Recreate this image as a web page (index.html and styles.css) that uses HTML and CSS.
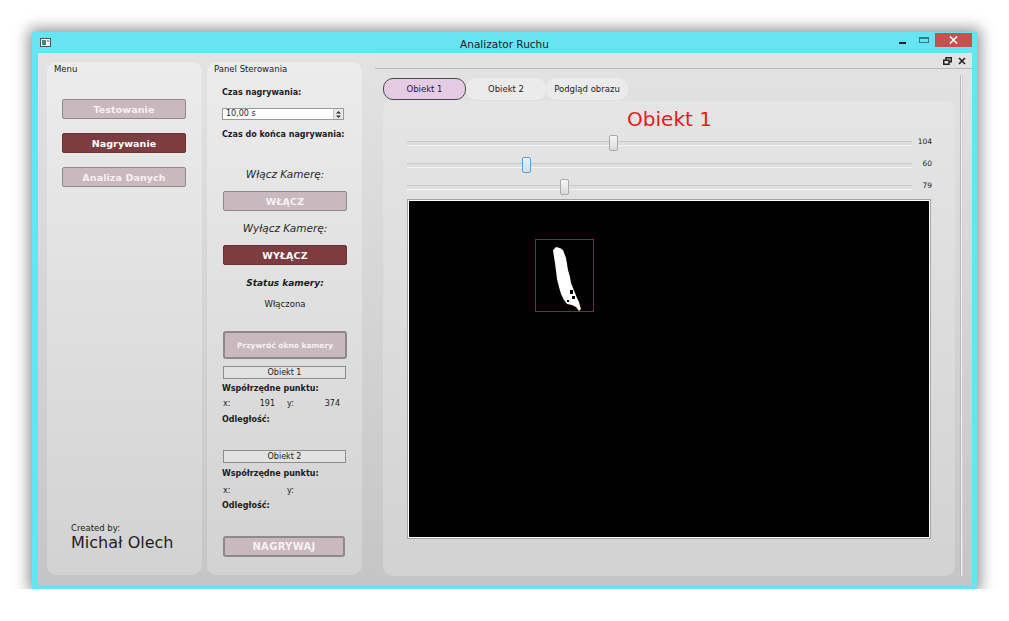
FILE: index.html
```html
<!DOCTYPE html>
<html lang="pl">
<head>
<meta charset="utf-8">
<title>Analizator Ruchu</title>
<link rel="stylesheet" href="styles.css">
</head>
<body>
<div class="window">
  <div class="titlebar">
    <div class="tb-left">
      <svg class="app-icon" width="11" height="9" viewBox="0 0 11 9">
        <rect x="0.5" y="0.5" width="10" height="8" fill="#f4f4f4" stroke="#555"/>
        <rect x="2" y="2" width="4" height="5" fill="#3d8f7a"/>
        <rect x="7" y="2" width="2" height="2" fill="#7fa6c9"/>
      </svg>
    </div>
    <div class="title">Analizator Ruchu</div>
    <div class="tb-right">
      <span class="wc-min"></span>
      <span class="wc-max"></span>
      <span class="wc-close">
        <svg width="9" height="8" viewBox="0 0 9 8"><path d="M1 0.5 L8 7.5 M8 0.5 L1 7.5" stroke="#fff" stroke-width="1.6"/></svg>
      </span>
    </div>
  </div>

  <div class="client">
    <section class="panel menu">
      <div class="panel-label">Menu</div>
      <div class="menu-buttons">
        <button class="btn">Testowanie</button>
        <button class="btn active">Nagrywanie</button>
        <button class="btn">Analiza Danych</button>
      </div>
      <div class="credits">
        <div class="created">Created by:</div>
        <div class="author">Michał Olech</div>
      </div>
    </section>

    <section class="panel control">
      <div class="panel-label">Panel Sterowania</div>
      <div class="lbl b s-czas">Czas nagrywania:</div>
      <div class="spin">
        <span class="spin-val">10,00 s</span>
        <span class="spin-btn">
          <svg width="7" height="9" viewBox="0 0 7 9"><path d="M1 3.5 L3.5 1 L6 3.5 Z M1 5.5 L3.5 8 L6 5.5 Z" fill="#333"/></svg>
        </span>
      </div>
      <div class="lbl b s-koniec">Czas do końca nagrywania:</div>
      <div class="lbl it center s-wlacz">Włącz Kamerę:</div>
      <button class="btn wide s-btn1">WŁĄCZ</button>
      <div class="lbl it center s-wylacz">Wyłącz Kamerę:</div>
      <button class="btn wide active s-btn2">WYŁĄCZ</button>
      <div class="lbl bi center s-status">Status kamery:</div>
      <div class="lbl n center s-wlaczona">Włączona</div>
      <button class="btn wide restore s-restore">Przywróć okno kamery</button>
      <div class="objbox s-obj1">Obiekt 1</div>
      <div class="lbl b s-wsp1">Współrzędne punktu:</div>
      <div class="coords s-xy1">
        <div class="coord"><span>x:</span><span>191</span></div>
        <div class="coord"><span>y:</span><span>374</span></div>
      </div>
      <div class="lbl b s-odl1">Odległość:</div>
      <div class="objbox s-obj2">Obiekt 2</div>
      <div class="lbl b s-wsp2">Współrzędne punktu:</div>
      <div class="coords s-xy2">
        <div class="coord"><span>x:</span><span></span></div>
        <div class="coord"><span>y:</span><span></span></div>
      </div>
      <div class="lbl b s-odl2">Odległość:</div>
      <button class="btn wide rec s-rec">NAGRYWAJ</button>
    </section>

    <section class="mdi">
      <div class="mdi-strip">
        <svg width="9" height="8" viewBox="0 0 9 8"><rect x="3" y="0.75" width="5.25" height="4" fill="none" stroke="#222" stroke-width="1.5"/><rect x="0.75" y="3.25" width="5.25" height="4" fill="#e4e4e4" stroke="#222" stroke-width="1.5"/></svg>
        <svg width="8" height="8" viewBox="0 0 8 8"><path d="M1 1 L7 7 M7 1 L1 7" stroke="#222" stroke-width="1.6"/></svg>
      </div>
      <div class="mdi-body">
        <div class="mdi-main">
          <div class="tabs">
            <div class="tab current">Obiekt 1</div>
            <div class="tab t2">Obiekt 2</div>
            <div class="tab t3">Podgląd obrazu</div>
          </div>
          <div class="tab-panel">
            <div class="obj-title">Obiekt 1</div>
            <div class="slider-row">
              <div class="track"><span class="handle" style="left: 40.8%"></span></div>
              <div class="val">104</div>
            </div>
            <div class="slider-row">
              <div class="track"><span class="handle focus" style="left: 23.5%"></span></div>
              <div class="val">60</div>
            </div>
            <div class="slider-row">
              <div class="track"><span class="handle" style="left: 31%"></span></div>
              <div class="val">79</div>
            </div>
            <div class="frame">
              <svg width="520" height="336" viewBox="0 0 520 336">
                <rect width="520" height="336" fill="#000"/>
                <rect x="126.5" y="38.5" width="58" height="72" fill="none" stroke="#e00000" stroke-width="1"/>
                <polygon fill="#fff" points="144,49 147,46 151,47 154,49 157,57 158,63 159,69 161,76 162,82 164,87 166,92 168,97 170,101 171,105 172,108 170,110 167,106 163,104 158,103 155,99 152,93 150,86 148,78 147,70 146,62 145,56"/>
                <rect x="161" y="89" width="3" height="4" fill="#000"/>
                <rect x="163" y="95" width="3" height="3" fill="#000"/>
                <rect x="158" y="99" width="2" height="2" fill="#000"/>
              </svg>
            </div>
          </div>
        </div>
        <div class="vscroll"></div>
      </div>
    </section>
  </div>
</div>
</body>
</html>
```

FILE: styles.css
```css
* { box-sizing: border-box; }

html, body {
  margin: 0;
  padding: 0;
  background: #ffffff;
}

body {
  padding: 32px 0 0 32px;
  font-family: "DejaVu Sans", "Liberation Sans", sans-serif;
  color: #1c1c1c;
}

.window {
  width: 945px;
  height: 557px;
  background: #67e4f1;
  box-shadow: 0 0 14px 3px rgba(0, 0, 0, 0.45);
  display: flex;
  flex-direction: column;
}

/* title bar */
.titlebar {
  height: 21px;
  display: grid;
  grid-template-columns: 1fr auto 1fr;
  align-items: start;
}
.tb-left { padding: 6px 0 0 8px; }
.app-icon { display: block; }
.title {
  font-size: 10.5px;
  line-height: 13px;
  padding-top: 6px;
  color: #1a1a1a;
}
.tb-right {
  display: flex;
  justify-content: flex-end;
  align-items: flex-start;
  padding: 1px 5px 0 0;
}
.wc-min {
  width: 7px;
  height: 2px;
  background: #222;
  margin: 9px 13px 0 0;
}
.wc-max {
  width: 10px;
  height: 6px;
  border: 1px solid #2f7f8b;
  border-top-width: 2px;
  margin: 4px 6px 0 0;
}
.wc-close {
  width: 37px;
  height: 14px;
  background: #c75050;
  display: flex;
  align-items: center;
  justify-content: center;
}
.wc-close svg { display: block; }

/* client area */
.client {
  flex: 1;
  margin: 0 5px 4px 6px;
  background: linear-gradient(#e3e3e3, #c5c5c5);
  display: flex;
  padding: 9px 0 0 9px;
}

.panel {
  width: 155px;
  height: 513px;
  border-radius: 10px;
  background: linear-gradient(#ececec, #d2d2d2);
  display: flex;
  flex-direction: column;
}
.panel + .panel { margin-left: 5px; }

.panel-label {
  font-size: 8.5px;
  line-height: 14px;
  height: 14px;
  padding-left: 7px;
  color: #222;
}

/* buttons */
.btn {
  display: block;
  width: 124px;
  height: 20px;
  padding: 0;
  margin: 0;
  border: 1px solid #8e8a8b;
  border-radius: 2px;
  background: #c9b8be;
  color: #f7f1f3;
  font-family: "DejaVu Sans", "Liberation Sans", sans-serif;
  font-weight: bold;
  font-size: 9.5px;
  letter-spacing: 0.1px;
}
.btn.active {
  background: #7d3c3f;
  border-color: #6b3234;
  color: #ffffff;
}

/* menu panel */
.menu-buttons {
  display: flex;
  flex-direction: column;
  gap: 14px;
  padding: 23px 0 0 15px;
}
.credits {
  margin-top: auto;
  padding: 0 0 23px 24px;
}
.created {
  font-size: 8.5px;
  line-height: 12px;
  color: #222;
}
.author {
  font-size: 16px;
  line-height: 18px;
  color: #1e1e1e;
}

/* control panel */
.control { padding-left: 15px; }
.control .panel-label { margin-left: -15px; }

.lbl {
  font-size: 8px;
  line-height: 14px;
  height: 14px;
  white-space: nowrap;
}
.lbl.b { font-weight: bold; }
.lbl.it { font-style: italic; font-size: 10.5px; color: #2a2a2a; }
.lbl.bi { font-weight: bold; font-style: italic; font-size: 9px; }
.lbl.n { font-size: 8.5px; }
.lbl.center { width: 124px; text-align: center; padding-left: 2px; }

.spin {
  width: 122px;
  height: 12px;
  background: #fff;
  border: 1px solid #9a9a9a;
  display: flex;
  align-items: center;
  justify-content: space-between;
  font-size: 8px;
}
.spin-val { padding-left: 3px; line-height: 10px; }
.spin-btn {
  width: 10px;
  height: 10px;
  background: #e8e8e8;
  border-left: 1px solid #c4c4c4;
  display: flex;
  align-items: center;
  justify-content: center;
}
.spin-btn svg { display: block; }

.btn.wide { margin-left: 1px; }
.btn.restore {
  height: 28px;
  font-size: 7.5px;
  letter-spacing: 0;
  border-color: #8a8a8a;
  border-width: 2px;
  border-radius: 3px;
}
.btn.rec {
  width: 122px;
  height: 21px;
  font-size: 10px;
  letter-spacing: 0.3px;
  border-width: 2px;
  border-radius: 3px;
}

.objbox {
  width: 123px;
  height: 13px;
  margin-left: 1px;
  background: #e2e2e2;
  border: 1px solid #8d8d8d;
  font-size: 8px;
  line-height: 11px;
  text-align: center;
  color: #222;
}

.coords {
  display: grid;
  grid-template-columns: 52px 53px;
  column-gap: 12px;
  font-size: 8px;
  line-height: 14px;
  height: 14px;
  padding-left: 1px;
}
.coord {
  display: flex;
  justify-content: space-between;
}

.s-czas { margin-top: 10px; }
.spin { margin-top: 8px; }
.s-koniec { margin-top: 8px; }
.s-wlacz { margin-top: 25px; }
.s-btn1 { margin-top: 10px; }
.s-wylacz { margin-top: 10px; }
.s-btn2 { margin-top: 10px; }
.s-status { margin-top: 11px; }
.s-wlaczona { margin-top: 7px; }
.s-restore { margin-top: 20px; }
.s-obj1 { margin-top: 7px; }
.s-wsp1 { margin-top: 3px; }
.s-xy1 { margin-top: 1px; }
.s-odl1 { margin-top: 2px; }
.s-obj2 { margin-top: 23px; }
.s-wsp2 { margin-top: 4px; }
.s-xy2 { margin-top: 3px; }
.s-odl2 { margin-top: 1px; }
.s-rec { margin-top: 23px; }

/* mdi area */
.mdi {
  width: 597px;
  margin: -9px 0 0 13px;
  display: flex;
  flex-direction: column;
}
.mdi-strip {
  height: 16px;
  background: #e2e2e2;
  border-bottom: 1px solid #b9b9b9;
  display: flex;
  justify-content: flex-end;
  align-items: center;
  gap: 6px;
  padding: 1px 6px 0 0;
}
.mdi-strip svg { display: block; }

.mdi-body {
  flex: 1;
  display: flex;
  padding: 9px 0 9px 8px;
}
.mdi-main {
  width: 572px;
  display: flex;
  flex-direction: column;
}
.vscroll {
  width: 3px;
  margin: -3px 0 0 5px;
  background: #f3f3f3;
  border-left: 1px solid #b8b8b8;
  border-right: 1px solid #d0d0d0;
}

.tabs {
  display: flex;
  height: 22px;
}
.tab {
  height: 22px;
  border-radius: 10px;
  font-size: 8.5px;
  line-height: 22px;
  text-align: center;
  color: #1e1e1e;
  background: #ebebeb;
}
.tab.current {
  width: 83px;
  background: #e6cbe5;
  border: 1px solid #4a4a4a;
  line-height: 20px;
}
.tab.t2 { width: 80px; }
.tab.t3 { width: 82px; }

.tab-panel {
  flex: 1;
  margin-top: 1px;
  border-radius: 10px;
  background: linear-gradient(#e5e5e5, #d2d2d2);
  padding: 7px 23px 0 24px;
}
.obj-title {
  height: 23px;
  font-size: 20px;
  line-height: 23px;
  text-align: center;
  color: #f01818;
  padding-left: 0;
}
.slider-row {
  display: flex;
  height: 22px;
}
.track {
  flex: 1;
  position: relative;
}
.track::before {
  content: "";
  position: absolute;
  left: 0;
  right: 0;
  top: 10px;
  height: 3px;
  border-top: 1px solid #c9c9c9;
  border-bottom: 1px solid #f4f4f4;
  background: #dedede;
}
.handle {
  position: absolute;
  top: 4px;
  width: 9px;
  height: 16px;
  margin-left: -4px;
  border: 1px solid #a9a9a9;
  border-radius: 2px;
  background: linear-gradient(#f6f6f6, #dadada);
}
.handle.focus {
  border-color: #5b9fd6;
  background: linear-gradient(#e6f1fa, #cfe1f1);
}
.val {
  width: 20px;
  text-align: right;
  font-size: 7.5px;
  line-height: 22px;
  color: #222;
}

.frame {
  margin: 3px 0 0 1px;
  width: 522px;
  height: 338px;
  border: 1px solid #ffffff;
  box-shadow: 0 0 0 1px #a4a4a4;
  background: #000;
}
.frame svg { display: block; }
```
